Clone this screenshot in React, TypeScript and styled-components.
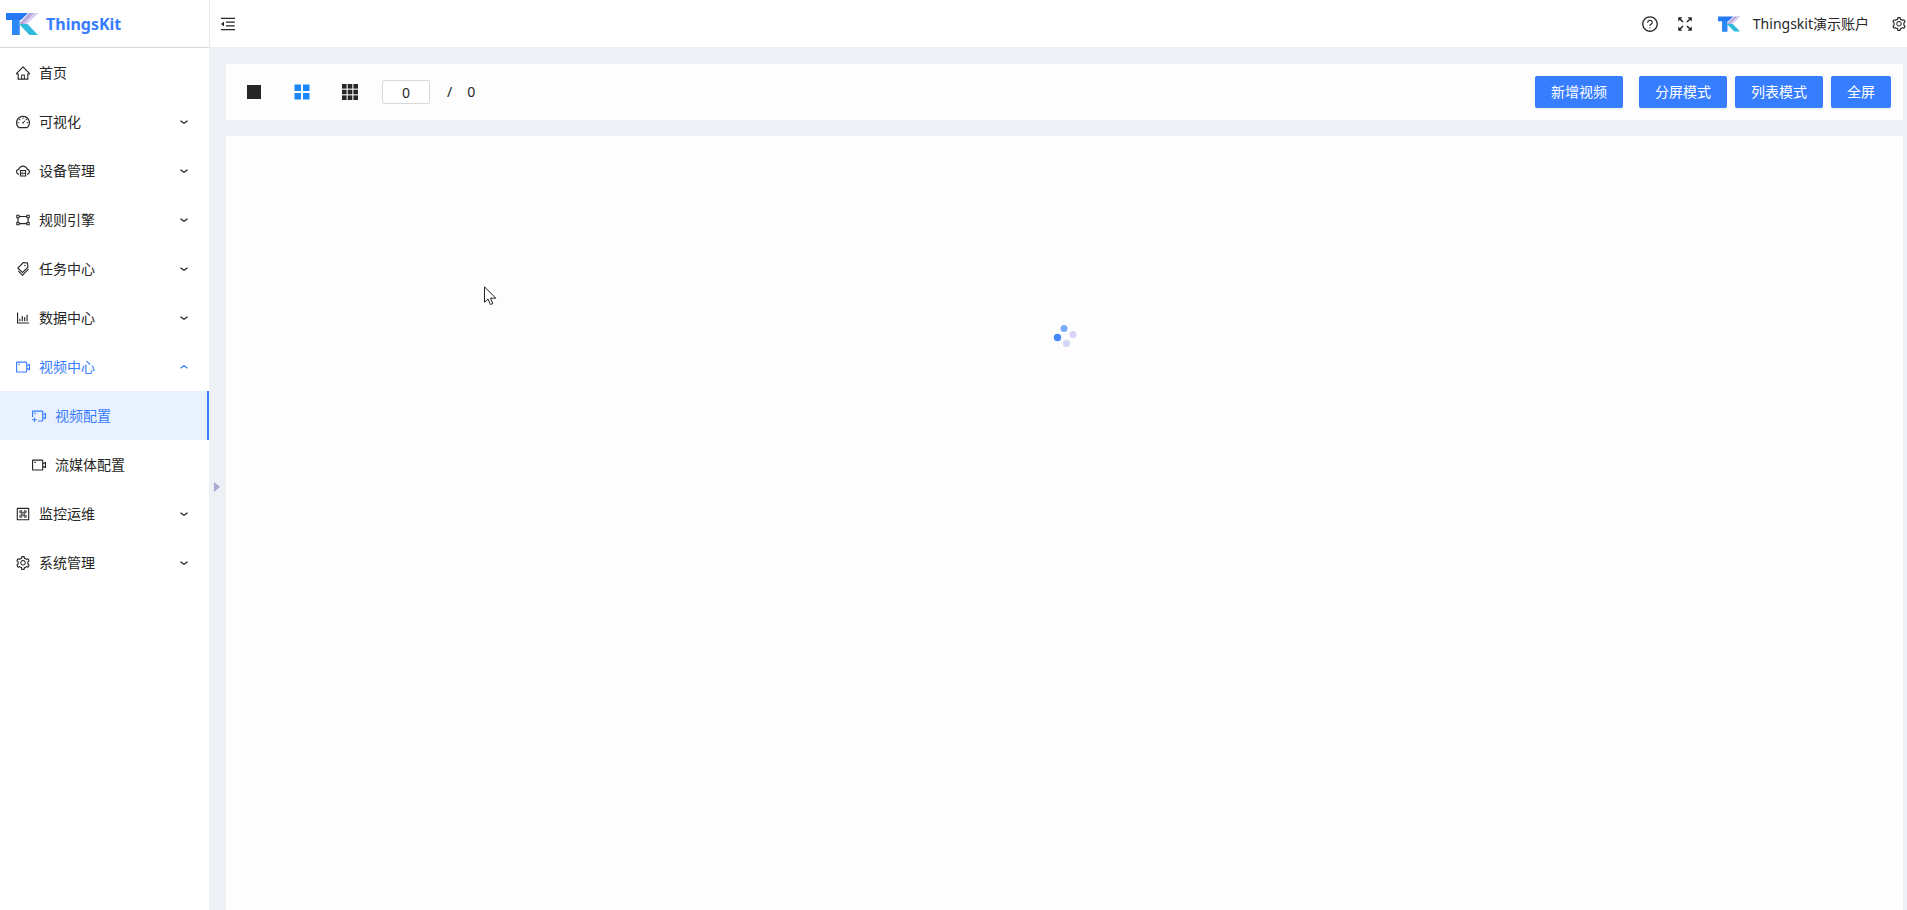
import React from 'react';
import styled, { createGlobalStyle } from 'styled-components';
import {
  AiOutlineHome,
  AiOutlineDashboard,
  AiOutlineCloudServer,
  AiOutlineGateway,
  AiOutlineTags,
  AiOutlineBarChart,
  AiOutlineVideoCamera,
  AiOutlineVideoCameraAdd,
  AiOutlineMacCommand,
  AiOutlineSetting,
  AiOutlineMenuFold,
  AiOutlineQuestionCircle,
} from 'react-icons/ai';

const blue = '#377dff';
const ink = '#262626';

const GlobalStyle = createGlobalStyle`
  *, *::before, *::after { box-sizing: border-box; }
  body {
    margin: 0;
    overflow: hidden;
    background: #edf1f5;
    color: ${ink};
    font-family: "Noto Sans", "Noto Sans CJK SC", sans-serif;
    font-size: 14px;
    line-height: 22px;
  }
  button, input { font: inherit; color: inherit; }
`;

const Shell = styled.div`
  display: grid;
  grid-template-columns: 209px minmax(0, 1fr);
  min-height: 100vh;
`;

const Sidebar = styled.aside`
  position: relative;
  background: #fff;
`;

const Brand = styled.a`
  display: flex;
  align-items: center;
  gap: 8px;
  height: 48px;
  padding: 0 6px;
  border-bottom: 1px solid #d6d6d6;
  color: ${blue};
  font-size: 16px;
  font-weight: 700;
  text-decoration: none;
`;

const Menu = styled.ul`
  margin: 0;
  padding: 0;
  list-style: none;
`;

const MenuLink = styled.a<{ $nested?: boolean; $blue?: boolean; $active?: boolean }>`
  display: flex;
  align-items: center;
  gap: 8px;
  height: 49px;
  padding: 0 21px 0 ${(p) => (p.$nested ? 31 : 15)}px;
  border-right: ${(p) => (p.$active ? `2px solid ${blue}` : 'none')};
  background: ${(p) => (p.$active ? '#eaf1fe' : 'transparent')};
  color: ${(p) => (p.$blue ? blue : ink)};
  text-decoration: none;

  svg { flex: none; }
`;

const MenuText = styled.span`
  flex: 1;
  white-space: nowrap;
`;

const CollapseHandle = styled.button`
  position: absolute;
  top: 478px;
  left: 100%;
  display: flex;
  align-items: center;
  width: 16px;
  height: 18px;
  padding: 0 0 0 5px;
  border: 0;
  background: none;
`;

const Main = styled.div`
  display: flex;
  flex-direction: column;
`;

const Header = styled.header`
  display: flex;
  align-items: center;
  justify-content: space-between;
  height: 47px;
  padding-left: 9px;
  border-left: 1px solid #e8ebee;
  background: #fff;
`;

const IconButton = styled.button`
  display: flex;
  padding: 0;
  border: 0;
  background: none;
`;

const HeaderActions = styled.div`
  display: flex;
  align-items: center;
`;

const HelpGroup = styled.div`
  display: flex;
  align-items: center;
  gap: 18px;
  margin-right: 25px;
`;

const Account = styled.button`
  display: flex;
  align-items: center;
  gap: 13px;
  margin-right: 22px;
  padding: 0;
  border: 0;
  background: none;
`;

const Content = styled.main`
  display: flex;
  flex: 1;
  flex-direction: column;
  gap: 16px;
  padding: 17px 4px 0 17px;
`;

const Toolbar = styled.section`
  display: flex;
  align-items: center;
  justify-content: space-between;
  height: 56px;
  padding: 0 12px 0 20px;
  background: #fdfdfd;
`;

const ToolGroup = styled.div`
  display: flex;
  align-items: center;
`;

const LayoutPicker = styled.div`
  display: flex;
  gap: 32px;
  margin-right: 24px;
`;

const PageInput = styled.input`
  width: 48px;
  height: 24px;
  padding: 0;
  border: 1px solid #d9d9d9;
  border-radius: 2px;
  background: #fff;
  text-align: center;
`;

const PageTotal = styled.span`
  display: flex;
  gap: 15px;
  margin-left: 17px;
`;

const ModeGroup = styled.div`
  display: flex;
  gap: 8px;
  margin-left: 16px;
`;

const PrimaryButton = styled.button`
  height: 32px;
  padding: 0 16px;
  border: 0;
  border-radius: 2px;
  background: ${blue};
  box-shadow: 0 2px 0 rgba(0, 0, 0, 0.04);
  color: #fff;
  white-space: nowrap;
`;

const VideoStage = styled.section`
  display: flex;
  flex: 1;
  justify-content: center;
  align-items: flex-start;
  padding-top: 188px;
  background: #fdfdfd;
`;

const Pointer = styled.svg`
  position: absolute;
  top: 286px;
  left: 484px;
`;

const Logo = ({ width, height }: { width: number; height: number }) => (
  <svg width={width} height={height} viewBox="0 0 32 22" aria-hidden="true">
    <path d="M0 0H22L15 7H13.500V22H6V7H0Z" fill="#2478f2" />
    <path d="M6 7H13.500V22H6Z" fill="#2b88f4" />
    <path d="M23 0H32L20 11.500H12.500Z" fill="#b9a8de" />
    <path d="M28 0H32L20 11.500L18 10Z" fill="#d9cff4" />
    <path d="M13 11H21.500L32 22H23.500Z" fill="#2fbbdb" />
  </svg>
);

const Chevron = ({ up }: { up?: boolean }) => (
  <svg width="8" height="6" viewBox="0 0 8 6" fill="none" stroke="currentColor" strokeWidth="1.3" aria-hidden="true">
    <path d={up ? 'M.4 4.3L4 1.8L7.6 4.3' : 'M.4 1.7L4 4.2L7.6 1.7'} />
  </svg>
);

const Tiles = ({ count, tile, gap, color }: { count: number; tile: number; gap: number; color: string }) => {
  const inset = (16 - count * tile - (count - 1) * gap) / 2;
  const steps = Array.from({ length: count }, (_, i) => inset + i * (tile + gap));
  return (
    <svg width="16" height="16" viewBox="0 0 16 16" fill={color} aria-hidden="true">
      {steps.map((y) => steps.map((x) => <rect key={`${x}-${y}`} x={x} y={y} width={tile} height={tile} />))}
    </svg>
  );
};

type Entry = {
  label: string;
  icon: React.ComponentType<{ size?: number }>;
  leaf?: boolean;
  open?: boolean;
  nested?: boolean;
  active?: boolean;
};

const entries: Entry[] = [
  { label: '首页', icon: AiOutlineHome, leaf: true },
  { label: '可视化', icon: AiOutlineDashboard },
  { label: '设备管理', icon: AiOutlineCloudServer },
  { label: '规则引擎', icon: AiOutlineGateway },
  { label: '任务中心', icon: AiOutlineTags },
  { label: '数据中心', icon: AiOutlineBarChart },
  { label: '视频中心', icon: AiOutlineVideoCamera, open: true },
  { label: '视频配置', icon: AiOutlineVideoCameraAdd, leaf: true, nested: true, active: true },
  { label: '流媒体配置', icon: AiOutlineVideoCamera, leaf: true, nested: true },
  { label: '监控运维', icon: AiOutlineMacCommand },
  { label: '系统管理', icon: AiOutlineSetting },
];

export default function App() {
  return (
    <>
      <GlobalStyle />
      <Shell>
        <Sidebar>
          <Brand href="#">
            <Logo width={32} height={22} />
            ThingsKit
          </Brand>
          <nav>
            <Menu>
              {entries.map(({ label, icon: Icon, leaf, open, nested, active }) => (
                <li key={label}>
                  <MenuLink href="#" $nested={nested} $active={active} $blue={active || open}>
                    <Icon size={16} />
                    <MenuText>{label}</MenuText>
                    {!leaf && <Chevron up={open} />}
                  </MenuLink>
                </li>
              ))}
            </Menu>
          </nav>
          <CollapseHandle aria-label="展开">
            <svg width="6" height="10" viewBox="0 0 6 10" fill="#aca8d2">
              <path d="M0 0L6 5L0 10Z" />
            </svg>
          </CollapseHandle>
        </Sidebar>
        <Main>
          <Header>
            <IconButton aria-label="折叠菜单">
              <AiOutlineMenuFold size={18} />
            </IconButton>
            <HeaderActions>
              <HelpGroup>
                <IconButton aria-label="帮助">
                  <AiOutlineQuestionCircle size={18} />
                </IconButton>
                <IconButton aria-label="全屏显示">
                  <svg width="16" height="16" viewBox="0 0 16 16" fill="currentColor" stroke="currentColor">
                    <path d="M1.2 1.2H5.400L1.2 5.400ZM14.800 1.2V5.400L10.600 1.2ZM1.2 14.800V10.600L5.400 14.800ZM14.800 14.800H10.600L14.800 10.600Z" stroke="none" />
                    <path d="M2.5 2.5L6 6M13.5 2.5L10 6M2.5 13.5L6 10M13.5 13.5L10 10" strokeWidth="1.5" />
                  </svg>
                </IconButton>
              </HelpGroup>
              <Account>
                <Logo width={22} height={16} />
                Thingskit演示账户
              </Account>
              <IconButton aria-label="设置">
                <AiOutlineSetting size={16} />
              </IconButton>
            </HeaderActions>
          </Header>
          <Content>
            <Toolbar>
              <ToolGroup>
                <LayoutPicker>
                  <IconButton aria-label="单画面">
                    <Tiles count={1} tile={14} gap={0} color={ink} />
                  </IconButton>
                  <IconButton aria-label="四画面">
                    <Tiles count={2} tile={6.5} gap={2} color="#1b87fb" />
                  </IconButton>
                  <IconButton aria-label="九画面">
                    <Tiles count={3} tile={4.6} gap={1.1} color={ink} />
                  </IconButton>
                </LayoutPicker>
                <PageInput aria-label="页码" defaultValue="0" />
                <PageTotal>
                  <span>/</span>
                  <span>0</span>
                </PageTotal>
              </ToolGroup>
              <ToolGroup>
                <PrimaryButton>新增视频</PrimaryButton>
                <ModeGroup>
                  <PrimaryButton>分屏模式</PrimaryButton>
                  <PrimaryButton>列表模式</PrimaryButton>
                  <PrimaryButton>全屏</PrimaryButton>
                </ModeGroup>
              </ToolGroup>
            </Toolbar>
            <VideoStage>
              <svg width="24" height="24" viewBox="0 0 24 24" role="img" aria-label="加载中">
                <circle cx="11" cy="4.5" r="3.5" fill="#7aaafa" />
                <circle cx="4.5" cy="13.5" r="3.7" fill="#4388fc" />
                <circle cx="20" cy="10.500" r="3.5" fill="#d8d2f5" />
                <circle cx="13.5" cy="19.5" r="3.5" fill="#d3d6f7" />
              </svg>
            </VideoStage>
          </Content>
        </Main>
      </Shell>
      <Pointer width="13" height="20" viewBox="0 0 13 20" aria-hidden="true">
        <path d="M.5 .8V16.3L4 13L6.4 18.5L8.8 17.5L6.5 12.2H11.8Z" fill="#fff" stroke="#222" />
      </Pointer>
    </>
  );
}
